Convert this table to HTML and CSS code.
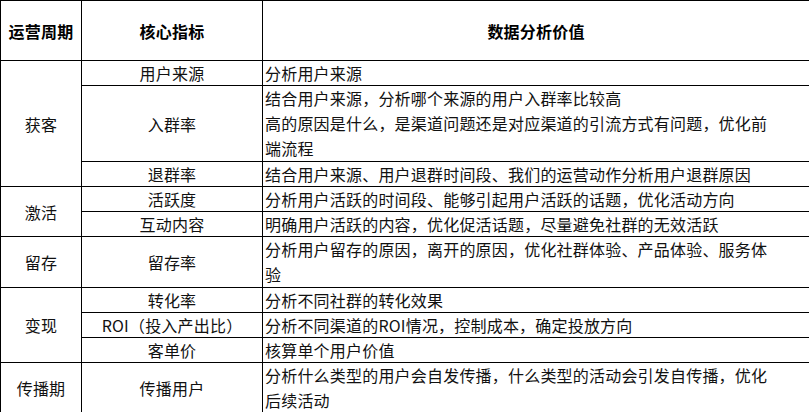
FILE: index.html
```html
<!DOCTYPE html>
<html lang="zh-CN">
<head>
<meta charset="utf-8">
<title>运营周期数据分析</title>
<link rel="stylesheet" href="styles.css">
</head>
<body>
<table class="grid">
  <colgroup>
    <col class="c-stage">
    <col class="c-metric">
    <col class="c-value">
  </colgroup>
  <thead>
    <tr class="head">
      <th>运营周期</th>
      <th>核心指标</th>
      <th>数据分析价值</th>
    </tr>
  </thead>
  <tbody>
    <tr>
      <td class="stage" rowspan="3">获客</td>
      <td class="metric">用户来源</td>
      <td class="value">分析用户来源</td>
    </tr>
    <tr>
      <td class="metric">入群率</td>
      <td class="value multi">结合用户来源，分析哪个来源的用户入群率比较高<br>高的原因是什么，是渠道问题还是对应渠道的引流方式有问题，优化前<br>端流程</td>
    </tr>
    <tr>
      <td class="metric">退群率</td>
      <td class="value">结合用户来源、用户退群时间段、我们的运营动作分析用户退群原因</td>
    </tr>
    <tr>
      <td class="stage" rowspan="2">激活</td>
      <td class="metric">活跃度</td>
      <td class="value">分析用户活跃的时间段、能够引起用户活跃的话题，优化活动方向</td>
    </tr>
    <tr>
      <td class="metric">互动内容</td>
      <td class="value">明确用户活跃的内容，优化促活话题，尽量避免社群的无效活跃</td>
    </tr>
    <tr>
      <td class="stage">留存</td>
      <td class="metric">留存率</td>
      <td class="value multi">分析用户留存的原因，离开的原因，优化社群体验、产品体验、服务体<br>验</td>
    </tr>
    <tr>
      <td class="stage" rowspan="3">变现</td>
      <td class="metric">转化率</td>
      <td class="value">分析不同社群的转化效果</td>
    </tr>
    <tr>
      <td class="metric">ROI（投入产出比）</td>
      <td class="value">分析不同渠道的ROI情况，控制成本，确定投放方向</td>
    </tr>
    <tr>
      <td class="metric">客单价</td>
      <td class="value">核算单个用户价值</td>
    </tr>
    <tr>
      <td class="stage">传播期</td>
      <td class="metric">传播用户</td>
      <td class="value multi">分析什么类型的用户会自发传播，什么类型的活动会引发自传播，优化<br>后续活动</td>
    </tr>
  </tbody>
</table>
</body>
</html>
```

FILE: styles.css
```css
html, body {
  margin: 0;
  padding: 0;
  background: #ffffff;
}

body {
  font-family: "Noto Sans CJK SC", "Noto Sans", sans-serif;
  font-size: 16px;
  color: #111111;
}

.grid {
  border-collapse: collapse;
  width: 809px;
  table-layout: fixed;
}

.c-stage { width: 81px; }
.c-metric { width: 181px; }
.c-value { width: 547px; }

.grid th,
.grid td {
  border: 1px solid #000;
  padding: 0 2px;
  line-height: 24px;
  vertical-align: middle;
  font-weight: 400;
  letter-spacing: 0.2px;
}

.head th {
  height: 59px;
  font-weight: 700;
  color: #000;
  text-align: center;
  padding: 0;
}

.stage,
.metric {
  text-align: center;
}

.value {
  text-align: left;
  white-space: nowrap;
}

.grid .multi {
  line-height: 25px;
}
```
